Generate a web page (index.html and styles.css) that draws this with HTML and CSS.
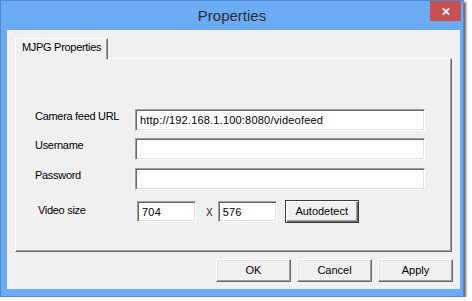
FILE: index.html
```html
<!DOCTYPE html>
<html lang="en">
<head>
<meta charset="utf-8">
<title>Properties</title>
<link rel="stylesheet" href="styles.css">
</head>
<body>
<div class="window">
  <div class="titlebar">
    <div class="title">Properties</div>
    <button class="close" aria-label="Close">
      <svg width="8" height="7" viewBox="0 0 8 7"><path d="M0.8 0.3 L7.2 6.7 M7.2 0.3 L0.8 6.7" stroke="#fff" stroke-width="1.7" fill="none"/></svg>
    </button>
  </div>
  <div class="client">
    <div class="tabs"><div class="tab">MJPG Properties</div></div>
    <div class="page">
      <div class="row">
        <label class="lbl">Camera feed URL</label>
        <input class="in url" type="text" value="http://192.168.1.100:8080/videofeed">
      </div>
      <div class="row r2">
        <label class="lbl">Username</label>
        <input class="in url" type="text" value="">
      </div>
      <div class="row r3">
        <label class="lbl">Password</label>
        <input class="in url" type="text" value="">
      </div>
      <div class="row video">
        <label class="lbl vlbl">Video size</label>
        <input class="in small" type="text" value="704">
        <span class="times">X</span>
        <input class="in small" type="text" value="576">
        <button class="btn default">Autodetect</button>
      </div>
    </div>
    <div class="buttons">
      <button class="btn">OK</button>
      <button class="btn">Cancel</button>
      <button class="btn">Apply</button>
    </div>
  </div>
</div>
</body>
</html>
```
FILE: styles.css
```css
html, body {
  margin: 0;
  padding: 0;
  background: #ffffff;
}
body {
  font-family: "Liberation Sans", Arial, sans-serif;
  font-size: 11px;
  color: #000;
}
.window {
  width: 464px;
  height: 297px;
  box-sizing: border-box;
  border: 1px solid #4f87d2;
  background: #6aabf4;
  box-shadow: 2px 2px 2px rgba(0, 0, 0, 0.6);
  display: flex;
  flex-direction: column;
}
.titlebar {
  height: 29px;
  display: grid;
  grid-template-columns: 1fr auto 1fr;
}
.title {
  grid-column: 2;
  font-size: 15px;
  line-height: 29px;
  color: #2e2e2e;
}
.close {
  grid-column: 3;
  justify-self: end;
  align-self: start;
  width: 31px;
  height: 20px;
  margin: 0 2px 0 0;
  padding: 0;
  border: 0;
  background: #c75050;
  display: flex;
  align-items: center;
  justify-content: center;
}
.close svg {
  display: block;
}
.client {
  flex: 1;
  margin: 0 3px 7px 6px;
  background: #f0f0f0;
  padding: 8px 8px 0 8px;
  display: flex;
  flex-direction: column;
}
.tabs {
  display: flex;
  height: 20px;
}
.tab {
  position: relative;
  z-index: 1;
  width: 93px;
  height: 21px;
  box-sizing: border-box;
  padding: 2px 0 0 6px;
  border-top: 1px solid #fff;
  border-left: 1px solid #fff;
  border-right: 1px solid #696969;
  box-shadow: inset -1px 0 0 #a0a0a0;
  background: #f0f0f0;
  line-height: 13px;
  letter-spacing: -0.3px;
  white-space: nowrap;
}
.page {
  height: 194px;
  box-sizing: border-box;
  border-top: 1px solid #fff;
  border-left: 1px solid #fff;
  border-right: 1px solid #696969;
  border-bottom: 1px solid #696969;
  box-shadow: inset -1px -1px 0 #a0a0a0;
  padding: 50px 0 0 19px;
}
.row {
  display: flex;
  align-items: flex-start;
}
.r2 {
  margin-top: 7px;
}
.r3 {
  margin-top: 8px;
}
.video {
  margin-top: 10px;
  height: 23px;
}
.lbl {
  width: 100px;
  margin-top: 1px;
  line-height: 13px;
  letter-spacing: -0.3px;
  white-space: nowrap;
}
.vlbl {
  width: 99px;
  margin-left: 3px;
  margin-top: 4px;
}
.in {
  height: 22px;
  box-sizing: border-box;
  margin: 0;
  padding: 0 4px;
  border: 1px solid;
  border-color: #a0a0a0 #ffffff #ffffff #a0a0a0;
  box-shadow: inset 1px 1px 0 #696969, inset -1px -1px 0 #e3e3e3;
  background: #fff;
  font-family: inherit;
  font-size: 11px;
  letter-spacing: 0.2px;
  color: #000;
  outline: none;
}
.url {
  width: 290px;
}
.small {
  width: 59px;
  height: 21px;
  margin-top: 1px;
}
.times {
  font-size: 10px;
  line-height: 12px;
  margin: 7px 5px 0 10px;
  color: #1b2030;
}
.btn {
  width: 75px;
  height: 23px;
  box-sizing: border-box;
  margin: 0;
  padding: 0 0 2px 0;
  background: #f0f0f0;
  border: 1px solid;
  border-color: #ffffff #696969 #696969 #ffffff;
  box-shadow: inset -1px -1px 0 #a0a0a0, inset 1px 1px 0 #e3e3e3;
  font-family: inherit;
  font-size: 11px;
  color: #000;
}
.btn.default {
  width: 74px;
  margin-left: 8px;
  border: 1px solid #3c3c3c;
  box-shadow: inset 1px 1px 0 #ffffff, inset -1px -1px 0 #696969, inset -2px -2px 0 #a0a0a0;
  padding-bottom: 1px;
}
.buttons {
  display: flex;
  justify-content: flex-end;
  gap: 6px;
  margin: 7px -1px 0 0;
}
```
